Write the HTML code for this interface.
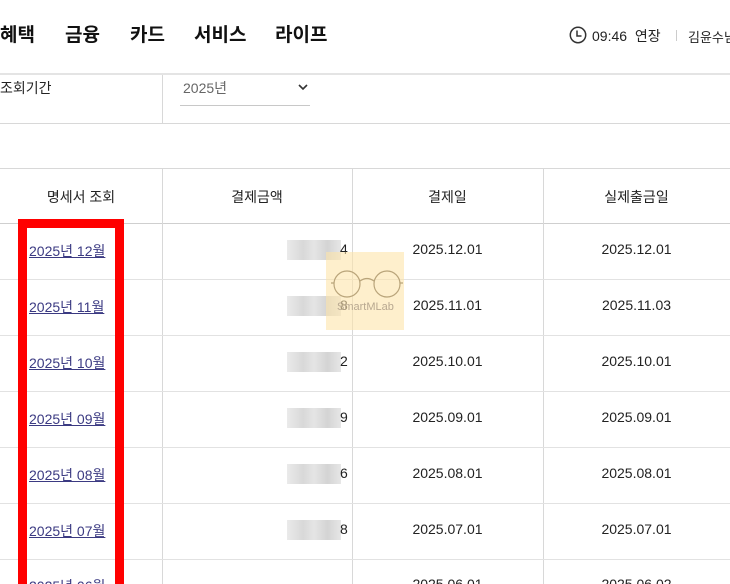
<!DOCTYPE html>
<html><head><meta charset="utf-8"><style>
*{margin:0;padding:0;box-sizing:border-box}
html,body{width:730px;height:584px;overflow:hidden}
body{background:#fff;font-family:"Liberation Sans","Noto Sans CJK KR",sans-serif;color:#222;position:relative}
.a{position:absolute}
.nav{top:20px;font-size:19px;font-weight:bold;color:#111}
.hl{left:0;width:730px;height:1px;background:#d8d8d8}
.vl{width:1px;background:#d8d8d8}
.c{position:absolute;text-align:center;font-size:14px;color:#222}
.lnk{left:0;width:162px;text-align:left;padding-left:29px;color:#3b3a82;text-decoration:underline;font-size:14px}
.blur{background:linear-gradient(90deg,#e8e8e8,#d4d4d4 30%,#e2e2e2 50%,#cfcfcf 75%,#e4e4e4);height:20px;width:54px;left:287px;opacity:.9}
</style></head><body>
<div class="a nav" style="left:0">혜택</div>
<div class="a nav" style="left:65px">금융</div>
<div class="a nav" style="left:130px">카드</div>
<div class="a nav" style="left:194px">서비스</div>
<div class="a nav" style="left:275px">라이프</div>
<svg class="a" style="left:569px;top:26px" width="18" height="18" viewBox="0 0 18 18"><circle cx="9" cy="9" r="7.7" fill="none" stroke="#333" stroke-width="1.5"/><path d="M8 4.5V10H12.5" fill="none" stroke="#333" stroke-width="1.5"/></svg>
<div class="a" style="left:592px;top:26px;font-size:14px;color:#222">09:46&nbsp; 연장</div>
<div class="a" style="left:676px;top:30px;width:1px;height:11px;background:#ccc"></div>
<div class="a" style="left:688px;top:27px;font-size:13px;color:#222;white-space:nowrap">김윤수님</div>
<div class="a hl" style="top:73px;height:2px;background:#e4e4e4"></div>
<div class="a" style="left:0;top:78px;font-size:14px">조회기간</div>
<div class="a vl" style="left:162px;top:75px;height:48px"></div>
<div class="a" style="left:183px;top:78px;font-size:14px;color:#666">2025년</div>
<svg class="a" style="left:297px;top:83px" width="12" height="8" viewBox="0 0 12 8"><path d="M2 2l4 4 4-4" fill="none" stroke="#333" stroke-width="1.6"/></svg>
<div class="a" style="left:180px;top:105px;width:130px;height:1px;background:#c8c8c8"></div>
<div class="a hl" style="top:123px"></div>
<div class="a hl" style="top:168px"></div>
<div class="a hl" style="top:223px;background:#cfcfcf"></div>
<div class="a vl" style="left:162px;top:168px;height:416px"></div>
<div class="a vl" style="left:352px;top:168px;height:416px"></div>
<div class="a vl" style="left:543px;top:168px;height:416px"></div>
<div class="c" style="left:0;width:162px;top:187px">명세서 조회</div>
<div class="c" style="left:162px;width:190px;top:187px">결제금액</div>
<div class="c" style="left:352px;width:191px;top:187px">결제일</div>
<div class="c" style="left:543px;width:187px;top:187px">실제출금일</div>

<div class="a hl" style="top:279px;background:#e2e2e2"></div>
<div class="a hl" style="top:335px;background:#e2e2e2"></div>
<div class="a hl" style="top:391px;background:#e2e2e2"></div>
<div class="a hl" style="top:447px;background:#e2e2e2"></div>
<div class="a hl" style="top:503px;background:#e2e2e2"></div>
<div class="a hl" style="top:559px;background:#e2e2e2"></div>

<div class="c lnk" style="top:241px">2025년 12월</div>
<div class="c lnk" style="top:297px">2025년 11월</div>
<div class="c lnk" style="top:353px">2025년 10월</div>
<div class="c lnk" style="top:409px">2025년 09월</div>
<div class="c lnk" style="top:465px">2025년 08월</div>
<div class="c lnk" style="top:521px">2025년 07월</div>
<div class="c lnk" style="top:576px">2025년 06월</div>

<div class="a blur" style="top:240px"></div><div class="c" style="left:340px;top:241px">4</div>
<div class="a blur" style="top:296px"></div><div class="c" style="left:340px;top:297px">8</div>
<div class="a blur" style="top:352px"></div><div class="c" style="left:340px;top:353px">2</div>
<div class="a blur" style="top:408px"></div><div class="c" style="left:340px;top:409px">9</div>
<div class="a blur" style="top:464px"></div><div class="c" style="left:340px;top:465px">6</div>
<div class="a blur" style="top:520px"></div><div class="c" style="left:340px;top:521px">8</div>

<div class="c" style="left:352px;width:191px;top:241px">2025.12.01</div>
<div class="c" style="left:352px;width:191px;top:297px">2025.11.01</div>
<div class="c" style="left:352px;width:191px;top:353px">2025.10.01</div>
<div class="c" style="left:352px;width:191px;top:409px">2025.09.01</div>
<div class="c" style="left:352px;width:191px;top:465px">2025.08.01</div>
<div class="c" style="left:352px;width:191px;top:521px">2025.07.01</div>
<div class="c" style="left:352px;width:191px;top:576px">2025.06.01</div>
<div class="c" style="left:543px;width:187px;top:241px">2025.12.01</div>
<div class="c" style="left:543px;width:187px;top:297px">2025.11.03</div>
<div class="c" style="left:543px;width:187px;top:353px">2025.10.01</div>
<div class="c" style="left:543px;width:187px;top:409px">2025.09.01</div>
<div class="c" style="left:543px;width:187px;top:465px">2025.08.01</div>
<div class="c" style="left:543px;width:187px;top:521px">2025.07.01</div>
<div class="c" style="left:543px;width:187px;top:576px">2025.06.02</div>

<div class="a" style="left:326px;top:252px;width:78px;height:78px;background:rgba(253,228,170,.6)"></div>
<svg class="a" style="left:329px;top:268px" width="76" height="34" viewBox="0 0 76 34"><g fill="none" stroke="#b9a47a" stroke-width="1.2"><circle cx="18" cy="16" r="13"/><circle cx="58" cy="16" r="13"/><path d="M31 13q7-5 14 0M5 15H2M71 15h3"/></g></svg>
<div class="a" style="left:337px;top:301px;font-size:11px;color:#b8a890">SmartMLab</div>

<div class="a" style="left:18px;top:219px;width:106px;height:365px;border:9px solid #f00;border-bottom:none"></div>
</body></html>
